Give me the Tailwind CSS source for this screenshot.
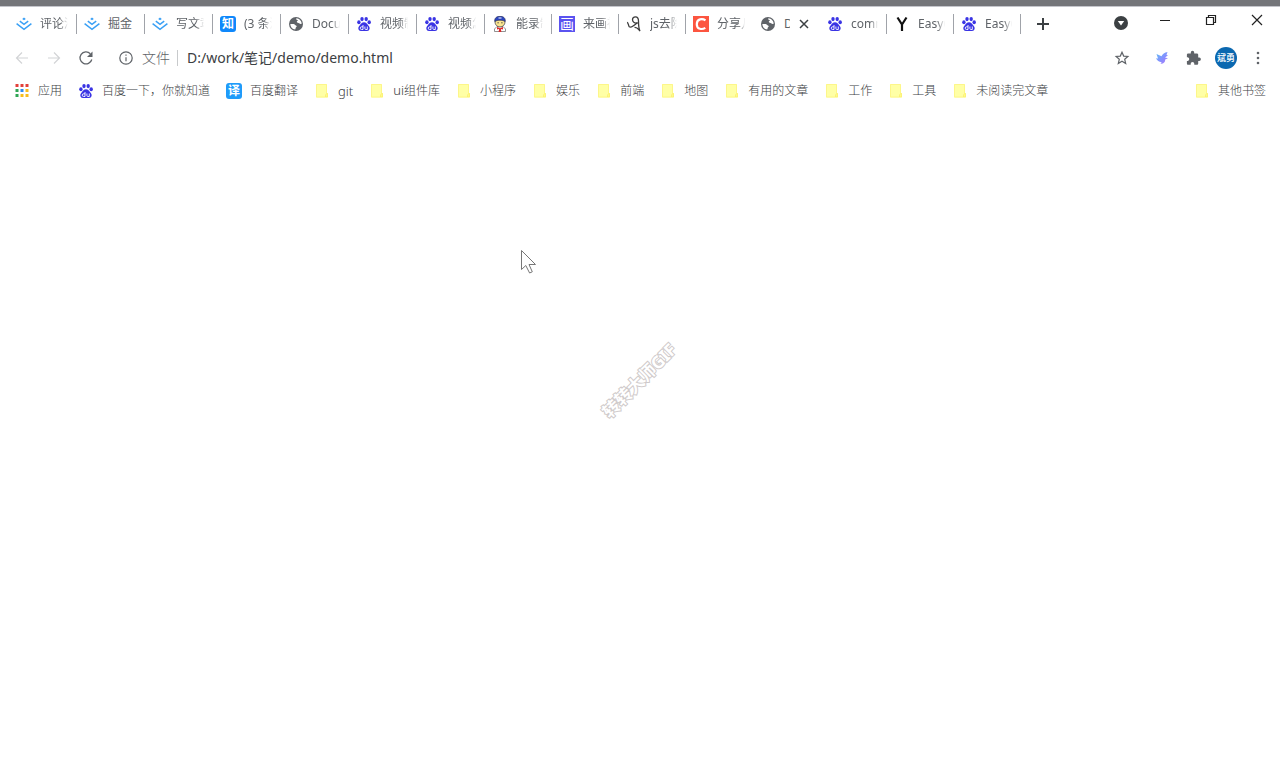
<!DOCTYPE html>
<html lang="zh-CN">
<head>
  <meta charset="UTF-8"/>
  <meta name="viewport" content="width=device-width,initial-scale=1"/>
  <title>demo.html</title>
  <script src="https://cdn.jsdelivr.net/npm/@tailwindcss/browser@4"></script>
</head>
<body class="bg-white font-['Noto_Sans','Noto_Sans_CJK_SC',sans-serif] font-light text-[#5f6368] min-h-screen flex flex-col">

  <!-- Shared icons -->
  <svg class="hidden">
    <symbol id="juejin" viewBox="0 0 16 16">
      <path d="M8 1.500l1.800 1.400L8 4.300 6.200 2.900z" fill="#3aa0f5"/>
      <path d="M3.800 5.200L8 8.400l4.200-3.200M.6 7.600L8 13.300l7.400-5.700" fill="none" stroke="#3aa0f5" stroke-width="1.500"/>
    </symbol>
    <symbol id="baidu" viewBox="0 0 16 16">
      <g fill="#3a34e4">
        <ellipse cx="2.900" cy="6.300" rx="1.700" ry="2"/>
        <ellipse cx="6" cy="3.100" rx="1.700" ry="2.100"/>
        <ellipse cx="10.200" cy="3.100" rx="1.700" ry="2.100"/>
        <ellipse cx="13.200" cy="6.300" rx="1.700" ry="2"/>
        <path d="M8 6.200c2.200 0 3 1.800 4.400 3.200 2.300 2.300 1.300 5.500-1.300 5.500H4.900c-2.600 0-3.600-3.200-1.300-5.500C5 8 5.800 6.200 8 6.200z"/>
      </g>
      <path d="M7 9v4.500H5.600a1.300 1.300 0 0 1 0-2.700H7M8.900 10.500v2c0 .7.400 1 1 1h1.400v-3" fill="none" stroke="#fff" stroke-width=".9"/>
    </symbol>
    <symbol id="globe" viewBox="0 0 16 16">
      <circle cx="8" cy="8" r="7" fill="#5f6368"/>
      <path d="M8.500 2.200c2.700.2 5 2.500 5.200 5.200-.8.900-1.600.7-2.200.1-.5-.6-1.600-.4-2.300-1-.8-.6-.3-1.500.5-1.800.4-.2.200-.7-.4-.8-1.100-.2-1.500-.9-.8-1.700zM2.300 8l3.300.1c1.300.1 1.300 1.100 2.200 1.400 1.100.3 1.200 1 .4 1.600-.7.500-.4 1.600-1 2.400A5.800 5.800 0 0 1 2.300 8z" fill="#fff"/>
    </symbol>
    <symbol id="folder" viewBox="0 0 16 16">
      <path d="M2 1h11v9h1v4.500H2z" fill="#ffffa6"/>
      <path d="M2.500 1.500h10v8.500M2.500 1.500v12.500h9" fill="none" stroke="#fdf68a" stroke-width="1"/>
      <path d="M11.500 14v-2l1-1.500h1V14z" fill="#fffb8c" stroke="#fbee6c" stroke-width=".7"/>
    </symbol>
  </svg>

  <div class="h-[7px] bg-[#747579] border-b border-[#c4c5cb]"></div>

  <header>
    <!-- Tabs -->
    <div class="flex items-start justify-between">
      <nav class="flex items-center h-[33px] pl-[9px] text-xs font-normal">
        <button class="w-[68px] h-5 flex items-center gap-2 pl-[7px] pr-2 border-r border-[#a0a3a9]">
          <svg class="size-4 shrink-0"><use href="#juejin"/></svg>
          <span class="flex-1 overflow-hidden whitespace-nowrap text-left mask-r-from-70%">评论沸点</span>
        </button>
        <button class="w-[68px] h-5 flex items-center gap-2 pl-[7px] pr-2 border-r border-[#a0a3a9]">
          <svg class="size-4 shrink-0"><use href="#juejin"/></svg>
          <span class="flex-1 overflow-hidden whitespace-nowrap text-left">掘金</span>
        </button>
        <button class="w-[68px] h-5 flex items-center gap-2 pl-[7px] pr-2 border-r border-[#a0a3a9]">
          <svg class="size-4 shrink-0"><use href="#juejin"/></svg>
          <span class="flex-1 overflow-hidden whitespace-nowrap text-left mask-r-from-70%">写文章</span>
        </button>
        <button class="w-[68px] h-5 flex items-center gap-2 pl-[7px] pr-2 border-r border-[#a0a3a9]">
          <span class="size-4 shrink-0 rounded-[3px] bg-[#0f88fb] text-white text-xs leading-4 font-bold text-center">知</span>
          <span class="flex-1 overflow-hidden whitespace-nowrap text-left mask-r-from-70%">(3 条消息)</span>
        </button>
        <button class="w-[68px] h-5 flex items-center gap-2 pl-[7px] pr-2 border-r border-[#a0a3a9]">
          <svg class="size-4 shrink-0"><use href="#globe"/></svg>
          <span class="flex-1 overflow-hidden whitespace-nowrap text-left mask-r-from-70%">Document</span>
        </button>
        <button class="w-[68px] h-5 flex items-center gap-2 pl-[7px] pr-2 border-r border-[#a0a3a9]">
          <svg class="size-4 shrink-0"><use href="#baidu"/></svg>
          <span class="flex-1 overflow-hidden whitespace-nowrap text-left mask-r-from-70%">视频制作</span>
        </button>
        <button class="w-[68px] h-5 flex items-center gap-2 pl-[7px] pr-2 border-r border-[#a0a3a9]">
          <svg class="size-4 shrink-0"><use href="#baidu"/></svg>
          <span class="flex-1 overflow-hidden whitespace-nowrap text-left mask-r-from-70%">视频怎么</span>
        </button>
        <button class="w-[67px] h-5 flex items-center gap-2 pl-[7px] pr-2 border-r border-[#a0a3a9]">
          <svg class="size-4 shrink-0" viewBox="0 0 16 16">
            <path d="M5 10.500h6l2.500 2.500v2.500h-11V13z" fill="#fff" stroke="#777" stroke-width=".8"/>
            <circle cx="8" cy="6" r="5" fill="#fbe58f" stroke="#4b4a55" stroke-width=".8"/>
            <path d="M2.800 5.500C2.200 1.800 5 .2 8 .2s5.800 1.600 5.200 5.300C11 3.800 5 3.800 2.800 5.500z" fill="#2c46c0" stroke="#23264a" stroke-width=".6"/>
            <path d="M6.500 2h3" stroke="#fff" stroke-width="1"/>
            <path d="M5.500 6.800h1.200M9.300 6.800h1.200" stroke="#333" stroke-width="1"/>
            <path d="M5 11l3 1.200 3-1.200v2.500l-3-.8-3 .8zM7.200 12.500h1.600l.6 3.500H6.600z" fill="#dc2a2a"/>
          </svg>
          <span class="flex-1 overflow-hidden whitespace-nowrap text-left mask-r-from-70%">能录制</span>
        </button>
        <button class="w-[67px] h-5 flex items-center gap-2 pl-[7px] pr-2 border-r border-[#a0a3a9]">
          <span class="size-4 shrink-0 bg-[#5b53f0] text-white text-sm leading-4 font-normal text-center">画</span>
          <span class="flex-1 overflow-hidden whitespace-nowrap text-left mask-r-from-70%">来画视频</span>
        </button>
        <button class="w-[67px] h-5 flex items-center gap-2 pl-[7px] pr-2 border-r border-[#a0a3a9]">
          <svg class="size-4 shrink-0" viewBox="0 0 16 16" fill="none" stroke="#3c3c3c" stroke-width="1.300">
            <path d="M1 6.500c1.500-.2 1.200 3 2.300 4.300 1.500 1 5-1.300 8.200-4.300"/>
            <path d="M11.500 6.800C9 8 6.500 6 6.500 3.800 6.500 1.800 8 .8 9.500.8c2.300 0 3 2 3 4.200 0 4 .3 8 1.500 10-1.500-1.500-2.500-4-5.500-3.700"/>
          </svg>
          <span class="flex-1 overflow-hidden whitespace-nowrap text-left mask-r-from-70%">js去除空</span>
        </button>
        <button class="w-[67px] h-5 flex items-center gap-2 pl-[7px] pr-2">
          <svg class="size-4 shrink-0" viewBox="0 0 16 16">
            <path d="M0 0h16v16H0z" fill="#fc5540"/>
            <path d="M12.500 4.300C9.500 2.300 3.800 2.500 3.800 8.200c0 5.500 5.500 5.500 8.500 3.700" fill="none" stroke="#fff" stroke-width="2.200"/>
          </svg>
          <span class="flex-1 overflow-hidden whitespace-nowrap text-left mask-r-from-80%">分享几个</span>
        </button>
        <div class="w-[67px] h-5 flex items-center pl-[7px] pr-2">
          <svg class="size-4 shrink-0"><use href="#globe"/></svg>
          <span class="ml-2 mr-1 w-1.5 overflow-hidden whitespace-nowrap">Document</span>
          <button aria-label="关闭标签页" class="ml-0.5 size-4 flex items-center justify-center text-[#3c4043]">
            <svg class="size-4" viewBox="0 0 16 16" stroke="currentColor" stroke-width="1.500"><path d="M4 4l8 8M12 4l-8 8"/></svg>
          </button>
        </div>
        <button class="w-[67px] h-5 flex items-center gap-2 pl-[7px] pr-2 border-r border-[#a0a3a9]">
          <svg class="size-4 shrink-0"><use href="#baidu"/></svg>
          <span class="flex-1 overflow-hidden whitespace-nowrap text-left mask-r-from-70%">common</span>
        </button>
        <button class="w-[67px] h-5 flex items-center gap-2 pl-[7px] pr-2 border-r border-[#a0a3a9]">
          <svg class="size-4 shrink-0" viewBox="0 0 16 16" fill="none" stroke="#111" stroke-width="2.200"><path d="M3.500 1.500L8 8.500l4.500-7M8 8v7"/></svg>
          <span class="flex-1 overflow-hidden whitespace-nowrap text-left mask-r-from-70%">EasyCanvas</span>
        </button>
        <button class="w-[67px] h-5 flex items-center gap-2 pl-[7px] pr-2 border-r border-[#a0a3a9]">
          <svg class="size-4 shrink-0"><use href="#baidu"/></svg>
          <span class="flex-1 overflow-hidden whitespace-nowrap text-left mask-r-from-70%">EasyCanvas</span>
        </button>
        <button aria-label="新标签页" class="ml-3.5 size-4 text-[#3c4043]">
          <svg class="size-4" viewBox="0 0 16 16" stroke="currentColor" stroke-width="2"><path d="M8 2v12M2 8h12"/></svg>
        </button>
      </nav>

      <!-- Window controls -->
      <div class="flex items-center h-[26px] pr-[15px] text-[#222]">
        <button aria-label="搜索标签页" class="size-4 mt-1.5">
          <svg class="size-4" viewBox="0 0 16 16"><circle cx="8" cy="8" r="7" fill="#3c4043"/><path d="M4.800 6h6.400L8 10.500z" fill="#fff"/></svg>
        </button>
        <button aria-label="最小化" class="size-4 ml-7">
          <svg class="size-4" viewBox="0 0 16 16" fill="none" stroke="currentColor"><path d="M3 8.500h10"/></svg>
        </button>
        <button aria-label="还原" class="size-4 ml-[30px]">
          <svg class="size-4" viewBox="0 0 16 16" fill="none" stroke="currentColor" stroke-width="1.200"><path d="M3.500 5.500h7v7h-7zM5.500 5.500v-2h7v7h-2"/></svg>
        </button>
        <button aria-label="关闭" class="size-4 ml-[30px]">
          <svg class="size-4" viewBox="0 0 16 16" stroke="currentColor" stroke-width="1.200"><path d="M3 3l10 10M13 3L3 13"/></svg>
        </button>
      </div>
    </div>

    <!-- Toolbar -->
    <div class="flex items-center h-9 px-3.5">
      <button aria-label="后退" class="size-4 text-[#d2d4d6]">
        <svg class="size-4" viewBox="0 0 16 16" fill="none" stroke="currentColor" stroke-width="1.200"><path d="M14 8H2.500M8 2.500L2.500 8 8 13.500"/></svg>
      </button>
      <button aria-label="前进" class="size-4 ml-4 text-[#d2d4d6]">
        <svg class="size-4" viewBox="0 0 16 16" fill="none" stroke="currentColor" stroke-width="1.200"><path d="M2 8h11.500M8 2.500L13.500 8 8 13.500"/></svg>
      </button>
      <button aria-label="重新加载" class="size-4 ml-4">
        <svg class="size-4" viewBox="0 0 16 16" fill="none" stroke="currentColor" stroke-width="1.300"><path d="M13.800 9.500A6 6 0 1 1 12.300 3.700"/><path d="M14.500 1.500v5.500H9z" fill="currentColor" stroke="none"/></svg>
      </button>
      <svg class="size-4 ml-6" viewBox="0 0 16 16" fill="none" stroke="currentColor" stroke-width="1.200"><circle cx="8" cy="8" r="6.200"/><path d="M8 7.200v4M8 4.500v1.300"/></svg>
      <label for="url" class="ml-2 pr-[7px] text-sm leading-4 border-r border-[#c8cacc]">文件</label>
      <input id="url" type="text" value="D:/work/笔记/demo/demo.html" class="flex-1 min-w-0 ml-[9px] text-sm font-normal text-[#3c4043] outline-none"/>
      <button aria-label="收藏" class="size-4">
        <svg class="size-4" viewBox="0 0 16 16" fill="none" stroke="currentColor" stroke-width="1.200"><path d="M8 2.200l1.700 3.900 4.200.4-3.200 2.800 1 4.200L8 11.300l-3.700 2.200 1-4.200-3.200-2.800 4.200-.4z"/></svg>
      </button>
      <button aria-label="扩展" class="size-4 ml-6">
        <svg class="size-4" viewBox="0 0 16 16">
          <defs><linearGradient id="wing" x1="0" x2="1" y1="0" y2="1"><stop offset="0" stop-color="#5cc0f5"/><stop offset=".6" stop-color="#8a8cff"/><stop offset="1" stop-color="#b27cf5"/></linearGradient></defs>
          <path d="M2.500 4L7.500 6.200c1-2.200 3-3.700 6-4.200l-1 3 1.500.2-3 2.300 3 .8-2.800 1.200c.2 2.700-1.700 4.400-4.700 4.200l1.200-1.500C5 11.800 3 10.500 2 8.300l2 .2z" fill="url(#wing)"/>
        </svg>
      </button>
      <button aria-label="扩展程序" class="size-4 ml-4">
        <svg class="size-4" viewBox="0 0 16 16" fill="currentColor"><path d="M13.200 7.500h-1V4.700c0-.7-.6-1.300-1.300-1.300H8.200V2.500a1.700 1.700 0 0 0-3.400 0v.9H2.100c-.7 0-1.200.6-1.200 1.300v2.500h.9a1.900 1.900 0 0 1 0 3.700H.9v2.600c0 .7.500 1.300 1.200 1.300h2.600v-1a1.800 1.800 0 0 1 3.600 0v1h2.600c.7 0 1.300-.6 1.300-1.300v-2.600h1a1.700 1.700 0 0 0 0-3.400z"/></svg>
      </button>
      <button aria-label="个人资料" class="size-[22px] ml-[13px] rounded-full bg-[#0b68b0] text-white text-[9px] font-medium">斌勇</button>
      <button aria-label="菜单" class="size-4 ml-[13px]">
        <svg class="size-4" viewBox="0 0 16 16" fill="currentColor"><circle cx="8" cy="3" r="1.300"/><circle cx="8" cy="8" r="1.300"/><circle cx="8" cy="13" r="1.300"/></svg>
      </button>
    </div>

    <!-- Bookmarks -->
    <nav class="flex items-center justify-between h-[29px] px-3.5 text-xs text-[#3c4043] whitespace-nowrap">
      <div class="flex items-center gap-4">
        <a href="#" class="flex items-center gap-2">
          <svg class="size-4" viewBox="0 0 16 16">
            <path d="M1.500 1h3v3h-3zM6.500 1h3v3h-3zM11.500 1h3v3h-3z" fill="#e3403a"/>
            <path d="M1.500 6h3v3h-3zM1.500 11h3v3h-3z" fill="#2fa655"/>
            <path d="M6.500 6h3v3h-3z" fill="#2f8cf0"/>
            <path d="M11.500 6h3v3h-3zM6.500 11h3v3h-3zM11.500 11h3v3h-3z" fill="#f7bd1c"/>
          </svg>应用</a>
        <a href="#" class="flex items-center gap-2"><svg class="size-4"><use href="#baidu"/></svg>百度一下，你就知道</a>
        <a href="#" class="flex items-center gap-2"><span class="size-4 rounded-[3px] bg-[#1f9bfa] text-white leading-4 font-bold text-center">译</span>百度翻译</a>
        <a href="#" class="flex items-center gap-2"><svg class="size-4"><use href="#folder"/></svg><span class="text-[13px] leading-4">git</span></a>
        <a href="#" class="flex items-center gap-2"><svg class="size-4"><use href="#folder"/></svg><span class="leading-4"><span class="text-[13px]">ui</span>组件库</span></a>
        <a href="#" class="flex items-center gap-2"><svg class="size-4"><use href="#folder"/></svg>小程序</a>
        <a href="#" class="flex items-center gap-2"><svg class="size-4"><use href="#folder"/></svg>娱乐</a>
        <a href="#" class="flex items-center gap-2"><svg class="size-4"><use href="#folder"/></svg>前端</a>
        <a href="#" class="flex items-center gap-2"><svg class="size-4"><use href="#folder"/></svg>地图</a>
        <a href="#" class="flex items-center gap-2"><svg class="size-4"><use href="#folder"/></svg>有用的文章</a>
        <a href="#" class="flex items-center gap-2"><svg class="size-4"><use href="#folder"/></svg>工作</a>
        <a href="#" class="flex items-center gap-2"><svg class="size-4"><use href="#folder"/></svg>工具</a>
        <a href="#" class="flex items-center gap-2"><svg class="size-4"><use href="#folder"/></svg>未阅读完文章</a>
      </div>
      <a href="#" class="flex items-center gap-2"><svg class="size-4"><use href="#folder"/></svg>其他书签</a>
    </nav>
  </header>

  <!-- Page -->
  <main class="relative flex-1 flex items-start justify-center">
    <svg class="absolute left-[520px] top-[144px] w-[18px] h-[26px]" viewBox="0 0 18 26"><path d="M1.500 1.500v19l4.300-4 3.800 7.500 2.700-1.200L9 15.500h6.500z" fill="#fff" stroke="#777" stroke-width="1"/></svg>
    <p class="mt-[263px] pr-0.5 -rotate-45 text-[17px] leading-6 font-bold whitespace-nowrap text-white [-webkit-text-stroke:2px_#cfcaca] [paint-order:stroke_fill]">转转大师GIF</p>
  </main>

</body>
</html>
